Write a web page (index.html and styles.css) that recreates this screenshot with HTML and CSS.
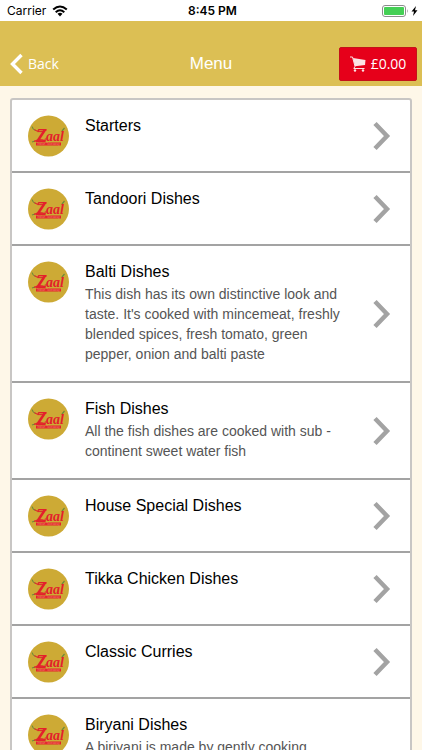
FILE: index.html
```html
<!DOCTYPE html>
<html lang="en">
<head>
    <meta charset="UTF-8">
    <meta name="viewport" content="width=device-width, initial-scale=1.0">
    <title>Menu</title>
    <link rel="stylesheet" href="styles.css">
</head>
<body>
    <!-- shared icons -->
    <svg class="sprite" aria-hidden="true">
        <symbol id="logo" viewBox="0 0 41 41">
            <circle cx="20.5" cy="20.5" r="20.5" fill="#cdaa35"/>
            <path d="M4 11 Q4.500 13.500 7.500 15 M34 15.500 L36.500 12.500 M4 26.500 L7 25.500" fill="none" stroke="#6d8a3a" stroke-width="1.200"/>
            <path d="M6.500 14.200 Q10 17 18.500 14.500 Q12 18.200 6.500 14.200 Z M6 25.800 Q12 22.500 18 25.500 Q12 25 6 25.800 Z" fill="#e3202b" stroke="#e3202b" stroke-width="0.700"/>
            <text x="8" y="26" class="logo-initial">Z</text>
            <text x="18" y="25" class="logo-name">aal</text>
            <rect x="8" y="27" width="25" height="3" fill="#e3202b"/>
            <text x="20.500" y="29.500" class="logo-tag">Indian Takeaway</text>
        </symbol>
        <symbol id="chevron" viewBox="0 0 18 30">
            <path d="M2 2.500 L14 15 L2 27.500" fill="none" stroke="#a3a3a3" stroke-width="4.500"/>
        </symbol>
    </svg>

    <div class="status-bar">
        <div class="carrier">
            <span>Carrier</span>
            <svg width="16" height="12" viewBox="0 0 16 12" aria-hidden="true">
                <path d="M1.200 4.600 Q8 -1.600 14.800 4.600 M3.700 7.200 Q8 3.200 12.300 7.200" fill="none" stroke="#000" stroke-width="2"/>
                <path d="M5.500 8.800 Q8 6.800 10.500 8.800 L8 11.400 Z" fill="#000"/>
            </svg>
        </div>
        <span class="time">8:45 PM</span>
        <div class="battery">
            <svg width="36" height="12" viewBox="0 0 36 12" aria-hidden="true">
                <rect x="0.500" y="0.500" width="23" height="11" rx="2.500" fill="#fff" stroke="#8c8c8c"/>
                <rect x="2" y="2" width="20" height="8" rx="1" fill="#44cf55"/>
                <path d="M25 4 Q26.500 6 25 8 Z" fill="#8c8c8c"/>
                <path d="M34 1 L29.500 6.500 H32 L31 11 L35.500 5.200 H33 Z" fill="#000"/>
            </svg>
        </div>
    </div>

    <header class="nav-bar">
        <a href="#" class="back">
            <svg width="13" height="22" viewBox="0 0 13 22" aria-hidden="true">
                <path d="M11.500 2 L2.500 11 L11.500 20" fill="none" stroke="#fff" stroke-width="3.400"/>
            </svg>
            <span>Back</span>
        </a>
        <h1>Menu</h1>
        <button type="button" class="cart">
            <svg width="16" height="16" viewBox="0 0 16 16" aria-hidden="true">
                <path d="M3 2 L15.500 4 L15 9 L5 10.300 Z" fill="#fbe3e4"/>
                <path d="M0 1 H2.500 L5 10.300 L3.800 12.500 H14.500" fill="none" stroke="#fbe3e4"/>
                <circle cx="5" cy="14.500" r="1.200" fill="#fbe3e4"/>
                <circle cx="13" cy="14.500" r="1.200" fill="#fbe3e4"/>
            </svg>
            <span>£0.00</span>
        </button>
    </header>

    <main>
        <ul class="menu-list">
            <li>
                <a href="#" class="menu-item">
                    <svg class="logo" aria-hidden="true"><use href="#logo"/></svg>
                    <div class="info">
                        <h2>Starters</h2>
                    </div>
                    <svg class="chevron" aria-hidden="true"><use href="#chevron"/></svg>
                </a>
            </li>
            <li>
                <a href="#" class="menu-item">
                    <svg class="logo" aria-hidden="true"><use href="#logo"/></svg>
                    <div class="info">
                        <h2>Tandoori Dishes</h2>
                    </div>
                    <svg class="chevron" aria-hidden="true"><use href="#chevron"/></svg>
                </a>
            </li>
            <li>
                <a href="#" class="menu-item">
                    <svg class="logo" aria-hidden="true"><use href="#logo"/></svg>
                    <div class="info">
                        <h2>Balti Dishes</h2>
                        <p>This dish has its own distinctive look and taste. It's cooked with mincemeat, freshly blended spices, fresh tomato, green pepper, onion and balti paste</p>
                    </div>
                    <svg class="chevron" aria-hidden="true"><use href="#chevron"/></svg>
                </a>
            </li>
            <li>
                <a href="#" class="menu-item">
                    <svg class="logo" aria-hidden="true"><use href="#logo"/></svg>
                    <div class="info">
                        <h2>Fish Dishes</h2>
                        <p>All the fish dishes are cooked with sub - continent sweet water fish</p>
                    </div>
                    <svg class="chevron" aria-hidden="true"><use href="#chevron"/></svg>
                </a>
            </li>
            <li>
                <a href="#" class="menu-item">
                    <svg class="logo" aria-hidden="true"><use href="#logo"/></svg>
                    <div class="info">
                        <h2>House Special Dishes</h2>
                    </div>
                    <svg class="chevron" aria-hidden="true"><use href="#chevron"/></svg>
                </a>
            </li>
            <li>
                <a href="#" class="menu-item">
                    <svg class="logo" aria-hidden="true"><use href="#logo"/></svg>
                    <div class="info">
                        <h2>Tikka Chicken Dishes</h2>
                    </div>
                    <svg class="chevron" aria-hidden="true"><use href="#chevron"/></svg>
                </a>
            </li>
            <li>
                <a href="#" class="menu-item">
                    <svg class="logo" aria-hidden="true"><use href="#logo"/></svg>
                    <div class="info">
                        <h2>Classic Curries</h2>
                    </div>
                    <svg class="chevron" aria-hidden="true"><use href="#chevron"/></svg>
                </a>
            </li>
            <li>
                <a href="#" class="menu-item long">
                    <svg class="logo" aria-hidden="true"><use href="#logo"/></svg>
                    <div class="info">
                        <h2>Biryani Dishes</h2>
                        <p>A biriyani is made by gently cooking</p>
                    </div>
                </a>
            </li>
        </ul>
    </main>
</body>
</html>
```
FILE: styles.css
```css
* {
    box-sizing: border-box;
}

body {
    display: flex;
    flex-direction: column;
    height: 100vh;
    margin: 0;
    overflow: hidden;
    background-color: #fef7e8;
    font-family: "Liberation Sans", Arial, sans-serif;
}

h1, h2, p, ul {
    margin: 0;
    padding: 0;
    font-weight: normal;
}

a {
    color: inherit;
    text-decoration: none;
}

.sprite {
    display: none;
}

.status-bar {
    display: grid;
    grid-template-columns: 1fr auto 1fr;
    align-items: center;
    flex-shrink: 0;
    height: 21px;
    padding: 0 4px 0 7px;
    background-color: #fff;
    font-family: Inter, sans-serif;
    font-size: 12px;
}

.carrier {
    display: flex;
    align-items: center;
    gap: 6px;
}

.time {
    font-weight: 600;
    font-size: 12px;
}

.battery {
    display: flex;
    justify-content: flex-end;
}

.nav-bar {
    display: grid;
    grid-template-columns: 1fr auto 1fr;
    align-items: center;
    flex-shrink: 0;
    height: 65px;
    padding: 20px 5px 0 5px;
    background-color: #dcbf54;
    color: #fff;
}

.nav-bar h1 {
    font-size: 17px;
}

.back {
    display: flex;
    align-items: center;
    gap: 5px;
    padding-left: 5px;
    font-family: "Open Sans", sans-serif;
    font-size: 14px;
}

.cart {
    display: flex;
    align-items: center;
    justify-content: center;
    justify-self: end;
    gap: 5px;
    width: 78px;
    height: 34px;
    padding: 0;
    border: 1px solid #c4121a;
    border-radius: 2px;
    background-color: #e6001a;
    color: #fff;
    font-family: "Open Sans", sans-serif;
    font-size: 14px;
    cursor: pointer;
}

main {
    flex: 1;
    min-height: 0;
    padding: 12px 10px 0 10px;
    overflow: hidden;
}

.menu-list {
    list-style: none;
    border: 2px solid #c8c6c4;
    border-radius: 3px;
    background-color: #fff;
}

.menu-item {
    display: flex;
    align-items: flex-start;
    gap: 16px;
    padding: 15px 19px 14px 16px;
    border-bottom: 2px solid #a3a3a3;
}

.menu-item.long {
    min-height: 97px;
}

.logo {
    flex-shrink: 0;
    width: 41px;
    height: 42px;
}

.logo-initial {
    fill: #e3202b;
    font: italic bold 18px "Liberation Serif", serif;
}

.logo-name {
    fill: #e3202b;
    font: italic bold 14px "Liberation Serif", serif;
}

.logo-tag {
    fill: #ef8a6a;
    font: 3px "Liberation Sans", sans-serif;
    text-anchor: middle;
}

.info {
    flex: 1;
}

.info h2 {
    color: #000;
    font-size: 16px;
    line-height: 22px;
}

.info p {
    padding: 1px 0 3px 0;
    color: #555;
    font-size: 14px;
    line-height: 20px;
}

.chevron {
    flex-shrink: 0;
    align-self: center;
    width: 18px;
    height: 30px;
}
```
